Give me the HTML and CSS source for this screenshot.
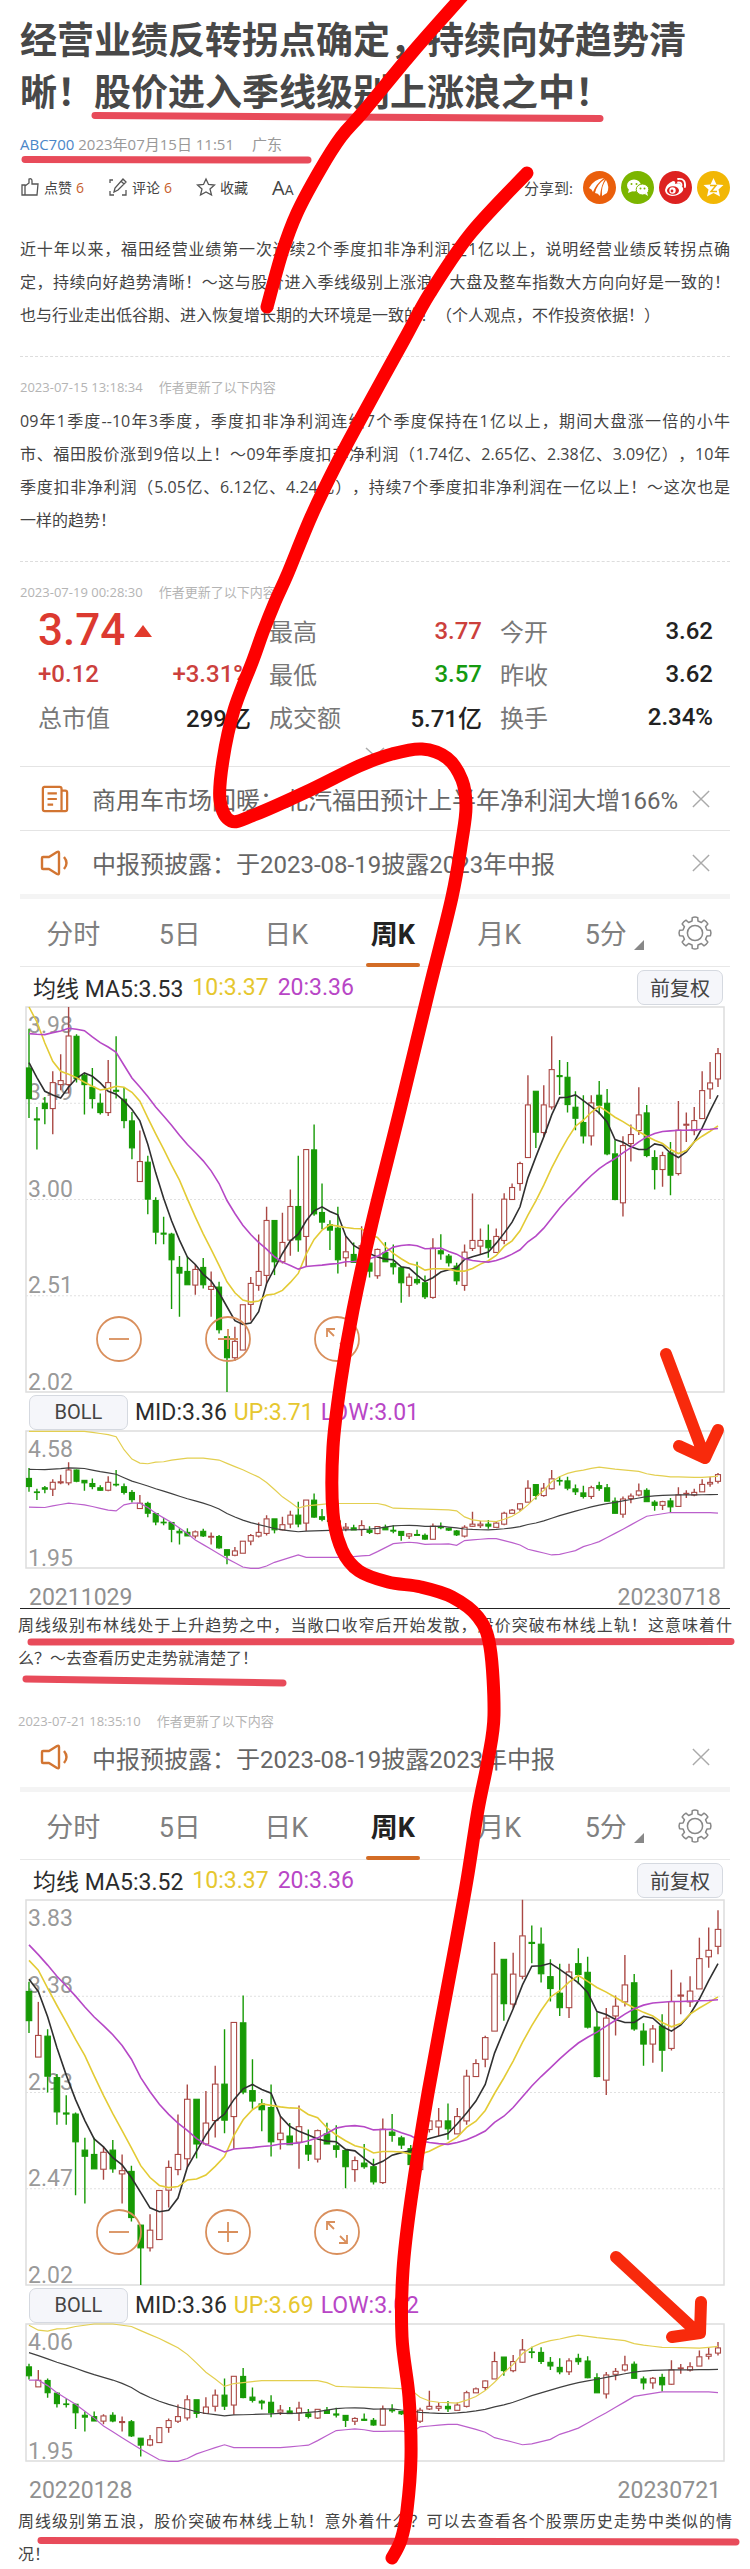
FILE: index.html
```html
<!DOCTYPE html>
<html lang="zh-CN">
<head>
<meta charset="utf-8">
<meta name="viewport" content="width=device-width, initial-scale=1">
<title>经营业绩反转拐点确定，持续向好趋势清晰！</title>
<link rel="stylesheet" href="styles.css">
</head>
<body>
<svg class="defs" aria-hidden="true">
  <symbol id="gear" viewBox="0 0 40 40"><path d="M17.1 3.8Q20 2.6 22.9 3.8L23.1 7.4L26.7 8.9L29.5 6.5Q32 8 33.5 10.5L31.1 13.3L32.6 16.9L36.2 17.1Q37.4 20 36.2 22.9L32.6 23.1L31.1 26.7L33.5 29.5Q32 32 29.5 33.5L26.7 31.1L23.1 32.6L22.9 36.2Q20 37.4 17.1 36.2L16.9 32.6L13.3 31.1L10.5 33.5Q8 32 6.5 29.5L8.9 26.7L7.4 23.1L3.8 22.9Q2.6 20 3.8 17.1L7.4 16.9L8.9 13.3L6.5 10.5Q8 8 10.5 6.5L13.3 8.9L16.9 7.4Z"/><circle cx="20" cy="20" r="8"/></symbol>
  <symbol id="horn" viewBox="0 0 30 28"><path d="M3 8H9L17 3Q19 2 19 4V24Q19 26 17 25L9 20H3Q2 20 2 19V9Q2 8 3 8Z"/><path d="M24 8Q29 14 24 20"/></symbol>
  <symbol id="cross" viewBox="0 0 20 20"><path d="M1 1L19 19M19 1L1 19"/></symbol>
</svg>
<article class="post">
  <h1 class="title"><span>经营业绩反转拐点确定，持续向好趋势清</span><span>晰！股价进入季线级别上涨浪之中！</span></h1>
  <p class="byline"><a href="#author">ABC700</a> <span>2023年07月15日 11:51</span> <span class="place">广东</span></p>
  <div class="toolbar">
    <button class="tool" type="button"><svg viewBox="0 0 20 20"><path d="M2 8H5V18H2ZM5 9L9 6V2Q12 1 12 4V7H18L17 18H5"/></svg>点赞 <b>6</b></button>
    <button class="tool" type="button"><svg viewBox="0 0 20 20"><path d="M2 6V3H5M2 14V18H6M18 13V18H14M6 15L7 11L15 2L18 5L10 13ZM13 4L16 7"/></svg>评论 <b>6</b></button>
    <button class="tool" type="button"><svg viewBox="0 0 20 20"><path d="M10 2L12.500 7.500L18.500 8L14 12L15.500 18L10 15L4.500 18L6 12L1.500 8L7.500 7.500Z"/></svg>收藏</button>
    <button class="tool size" type="button" aria-label="字号">A<small>A</small></button>
    <div class="share"><span>分享到:</span>
      <a href="#em" aria-label="东方财富"><svg viewBox="0 0 33 33"><circle cx="16.500" cy="16.500" r="16.500" fill="#ea5f0c"/><g fill="#fff"><path d="M6 17Q11 8 21 7Q13 13 10 21Q9 18 6 17Z"/><path d="M12 22Q14 13 22 8Q18 15 17 25Q15 22 12 22Z"/><path d="M19 25Q18 15 23 9Q27 16 24 22Q22 23 19 25Z"/></g></svg></a>
      <a href="#wx" aria-label="微信"><svg viewBox="0 0 33 33"><circle cx="16.500" cy="16.500" r="16.500" fill="#7bb500"/><g fill="#fff"><ellipse cx="13" cy="14.500" rx="7" ry="6"/><path d="M8 18L7 22L12 20Z"/><ellipse cx="21.500" cy="18.500" rx="6.300" ry="5.500" stroke="#7bb500"/><path d="M24 23L27 25L26 21Z"/></g><g fill="#7bb500"><circle cx="10.500" cy="13" r="1"/><circle cx="15.500" cy="13" r="1"/><circle cx="19.500" cy="17.500" r="1"/><circle cx="23.500" cy="17.500" r="1"/></g></svg></a>
      <a href="#wb" aria-label="微博"><svg viewBox="0 0 33 33"><circle cx="16.500" cy="16.500" r="16.500" fill="#dd2220"/><path d="M6 19Q7 13 14 10Q17 10 16 13Q22 11 22 15Q26 17 23 21Q19 25 13 25Q6 24 6 19Z" fill="#fff"/><ellipse cx="14" cy="19.500" rx="6" ry="4.300" fill="#dd2220"/><circle cx="13.500" cy="19.500" r="3.200" fill="#fff"/><circle cx="13" cy="20" r="1.400" fill="#dd2220"/><path d="M19 8Q27 7 26 16M19 11.500Q23 11 22.500 15" fill="none" stroke="#fff" stroke-width="1.800" stroke-linecap="round"/></svg></a>
      <a href="#qz" aria-label="QQ空间"><svg viewBox="0 0 33 33"><circle cx="16.500" cy="16.500" r="16.500" fill="#f2b705"/><path d="M16.500 7L19.500 13.500L26.500 14L21.500 18.500L23 25.500L16.500 22L10 25.500L11.500 18.500L6.500 14L13.500 13.500Z" fill="#fff"/><path d="M13 14.500H19L14 20.500H20" fill="none" stroke="#f2b705" stroke-width="1.500"/></svg></a>
    </div>
  </div>
  <p class="text lead"><span class="full">近十年以来，福田经营业绩第一次连续2个季度扣非净利润在1亿以上，说明经营业绩反转拐点确</span><span class="full">定，持续向好趋势清晰！～这与股价进入季线级别上涨浪、大盘及整车指数大方向向好是一致的！</span><span>也与行业走出低谷期、进入恢复增长期的大环境是一致的！（个人观点，不作投资依据！）</span></p>
  <hr class="dots">
  <p class="stamp"><time>2023-07-15 13:18:34</time><span>作者更新了以下内容</span></p>
  <p class="text"><span class="full">09年1季度--10年3季度，季度扣非净利润连续7个季度保持在1亿以上，期间大盘涨一倍的小牛</span><span class="full">市、福田股价涨到9倍以上！～09年季度扣非净利润（1.74亿、2.65亿、2.38亿、3.09亿），10年</span><span class="full">季度扣非净利润（5.05亿、6.12亿、4.24亿），持续7个季度扣非净利润在一亿以上！～这次也是</span><span>一样的趋势！</span></p>
  <hr class="dots">
  <p class="stamp"><time>2023-07-19 00:28:30</time><span>作者更新了以下内容</span></p>

  <section class="app">
    <dl class="quote">
      <div class="price"><dt class="hide">现价</dt><dd>3.74</dd><svg viewBox="0 0 18 12"><path d="M9 0L18 12H0Z"/></svg></div>
      <div><dt>最高</dt><dd class="up">3.77</dd></div><div><dt>今开</dt><dd>3.62</dd></div>
      <div><dt class="up strong">+0.12</dt><dd class="up">+3.31%</dd></div>
      <div><dt>最低</dt><dd class="down">3.57</dd></div><div><dt>昨收</dt><dd>3.62</dd></div>
      <div><dt>总市值</dt><dd>299亿</dd></div><div><dt>成交额</dt><dd>5.71亿</dd></div><div><dt>换手</dt><dd>2.34%</dd></div>
    </dl>
    <button class="more" type="button" aria-label="展开"><svg viewBox="0 0 20 10"><path d="M1 1L10 9L19 1"/></svg></button>
    <div class="news"><svg class="mark" viewBox="0 0 30 30"><path d="M3 2H20Q22 2 22 4V28H4Q2 28 2 26V4Q2 2 4 2M22 6H26Q28 6 28 8V26Q28 28 26 28H22M7 9H17M7 15H17M7 21H13"/></svg><span>商用车市场回暖：北汽福田预计上半年净利润大增166%</span><button type="button" aria-label="关闭"><svg><use href="#cross"/></svg></button></div>
    <div class="news"><svg class="mark"><use href="#horn"/></svg><span>中报预披露：于2023-08-19披露2023年中报</span><button type="button" aria-label="关闭"><svg><use href="#cross"/></svg></button></div>
    <nav class="tabs"><button type="button">分时</button><button type="button">5日</button><button type="button">日K</button><button type="button" class="on">周K</button><button type="button">月K</button><button type="button" class="drop">5分</button><button type="button" aria-label="设置"><svg><use href="#gear"/></svg></button></nav>
    <div class="legend"><span>均线 MA5:3.53</span><span class="y">10:3.37</span><span class="m">20:3.36</span><button class="chip" type="button">前复权</button></div>
    <div class="chart"><svg id="k1" viewBox="0 0 698 386"></svg>
      <div class="zoom"><button type="button" aria-label="缩小"><svg viewBox="0 0 46 46"><circle cx="23" cy="23" r="22"/><path d="M13 23H33"/></svg></button><button type="button" aria-label="放大"><svg viewBox="0 0 46 46"><circle cx="23" cy="23" r="22"/><path d="M13 23H33M23 13V33"/></svg></button><button type="button" aria-label="全屏"><svg viewBox="0 0 46 46"><circle cx="23" cy="23" r="22"/><path d="M13 21V13H21M13 13L20 20M33 26V34H25M33 34L26 27"/></svg></button></div></div>
    <div class="legend boll"><button class="chip" type="button">BOLL</button><span>MID:3.36</span><span class="y">UP:3.71</span><span class="m">LOW:3.01</span></div>
    <div class="chart"><svg id="b1" viewBox="0 0 698 138"></svg></div>
    <div class="dates ruled"><time>20211029</time><time>20230718</time></div>
  </section>
  <p class="text wide"><span class="full">周线级别布林线处于上升趋势之中，当敞口收窄后开始发散，股价突破布林线上轨！这意味着什</span><span>么？～去查看历史走势就清楚了！</span></p>
  <p class="stamp wide last"><time>2023-07-21 18:35:10</time><span>作者更新了以下内容</span></p>

  <section class="app">
    <div class="news short"><svg class="mark"><use href="#horn"/></svg><span>中报预披露：于2023-08-19披露2023年中报</span><button type="button" aria-label="关闭"><svg><use href="#cross"/></svg></button></div>
    <nav class="tabs"><button type="button">分时</button><button type="button">5日</button><button type="button">日K</button><button type="button" class="on">周K</button><button type="button">月K</button><button type="button" class="drop">5分</button><button type="button" aria-label="设置"><svg><use href="#gear"/></svg></button></nav>
    <div class="legend"><span>均线 MA5:3.52</span><span class="y">10:3.37</span><span class="m">20:3.36</span><button class="chip" type="button">前复权</button></div>
    <div class="chart"><svg id="k2" viewBox="0 0 698 386"></svg>
      <div class="zoom"><button type="button" aria-label="缩小"><svg viewBox="0 0 46 46"><circle cx="23" cy="23" r="22"/><path d="M13 23H33"/></svg></button><button type="button" aria-label="放大"><svg viewBox="0 0 46 46"><circle cx="23" cy="23" r="22"/><path d="M13 23H33M23 13V33"/></svg></button><button type="button" aria-label="全屏"><svg viewBox="0 0 46 46"><circle cx="23" cy="23" r="22"/><path d="M13 21V13H21M13 13L20 20M33 26V34H25M33 34L26 27"/></svg></button></div></div>
    <div class="legend boll"><button class="chip" type="button">BOLL</button><span>MID:3.36</span><span class="y">UP:3.69</span><span class="m">LOW:3.02</span></div>
    <div class="chart"><svg id="b2" viewBox="0 0 698 138"></svg></div>
    <div class="dates"><time>20220128</time><time>20230721</time></div>
  </section>
  <p class="text wide closing"><span class="full">周线级别第五浪，股价突破布林线上轨！意外着什么？可以去查看各个股票历史走势中类似的情</span><span>况！</span></p>

  <svg class="ink" viewBox="0 0 750 2569" preserveAspectRatio="none" aria-hidden="true">
    <g stroke="#e84b5a" stroke-width="7"><path d="M95 115.500L600 118.500M25 159.500L308 160M31 1642L731 1641.500M26 1679L283 1683M41 2540.500L736 2542"/></g>
    <g stroke="#f82a0c" stroke-width="12"><path d="M666 1354L705 1458M679 1446L705 1458L718 1430"/><path d="M616 2257L698 2333M672 2337L700 2333L701 2302"/></g>
    <g stroke="#fe0000" stroke-width="13" id="pen"></g>
  </svg>
</article>
<script src="chart.js"></script>
</body>
</html>
```
FILE: styles.css
```css
* { box-sizing: border-box; }
body { margin: 0; background: #fff; }
button { border: 0; padding: 0; margin: 0; background: none; font: inherit; color: inherit; }
svg { display: block; }
.defs { position: absolute; width: 0; height: 0; }
.post { position: relative; padding: 14px 20px 0; overflow: hidden; font-family: "Open Sans", "Noto Sans CJK SC", sans-serif; color: #444; text-spacing-trim: space-all; }
.title { margin: 0; font-size: 37px; line-height: 52px; font-weight: 700; color: #484848; }
.title span, .text span { display: block; white-space: nowrap; }
.byline { margin: 14px 0; font-size: 15px; line-height: 24px; color: #999; }
.byline a { color: #4a86c8; text-decoration: none; }
.place { margin-left: 14px; }
.toolbar { display: flex; align-items: center; height: 34px; gap: 24px; font-size: 14px; }
.tool { display: flex; align-items: center; gap: 4px; white-space: nowrap; }
.tool svg { width: 20px; height: 20px; fill: none; stroke: #555; stroke-width: 1.3; }
.tool b { font-weight: 400; color: #c7602c; }
.size { align-items: baseline; gap: 0; font-size: 20px; }
.size small { font-size: 14px; }
.share { display: flex; align-items: center; gap: 5px; margin-left: auto; font-size: 15px; }
.share span { margin-right: 5px; }
.share svg { width: 33px; height: 33px; }
.text { margin: 0; font-size: 16px; line-height: 33px; }
.text .full { text-align: justify; text-align-last: justify; }
.lead { margin-top: 29px; }
.dots { margin: 24px 0 20px; border: 0; border-top: 1px dashed #ddd; }
.stamp { display: flex; gap: 16px; margin: 0; font-size: 13px; line-height: 20px; color: #b4b4b4; }
.stamp + .text { margin-top: 8px; }
.wide { margin-left: -2px; margin-right: -2px; }
.last { margin-top: 36px; }
.closing { margin-top: 3px; margin-bottom: -2px; }
.app { font-family: Roboto, "Noto Sans CJK SC", sans-serif; }
.quote { display: grid; grid-template-columns: repeat(3, 1fr); column-gap: 18px; grid-auto-rows: 43px; margin: 7px 17px 0 18px; font-size: 24px; }
.quote div { display: flex; align-items: center; justify-content: space-between; }
.quote dt { color: #777; }
.quote dd { margin: 0; font-weight: 500; color: #222; }
.quote .price { justify-content: flex-start; gap: 9px; }
.quote .price dd { font-size: 44px; line-height: 43px; color: #dc3a30; }
.price svg { width: 18px; height: 12px; fill: #e23a2c; }
.quote .hide { display: none; }
.quote .up { color: #cc403c; }
.quote .strong { font-weight: 500; }
.quote .down { color: #159a10; }
.more { display: block; width: 100%; height: 28px; }
.more svg { width: 20px; height: 10px; margin: 0 auto; fill: none; stroke: #aaa; stroke-width: 1.5; }
.news { display: grid; grid-template-columns: 30px minmax(0, 1fr) 18px; align-items: center; gap: 22px; height: 64px; padding: 0 20px; border-top: 1px solid #e4e4e4; font-size: 24px; color: #666; white-space: nowrap; }
.news.short { height: 52px; margin-bottom: 4px; border: 0; }
.mark { width: 30px; height: 28px; fill: none; stroke: #d27532; stroke-width: 2.4; stroke-linejoin: round; }
.news button svg { width: 18px; height: 18px; stroke: #aaa; stroke-width: 1.6; fill: none; }
.tabs { display: grid; grid-template-columns: repeat(6, 15fr) 10fr; height: 73px; border-top: 5px solid #f4f4f4; border-bottom: 1px solid #e8e8e8; font-size: 27px; color: #808080; }
.tabs button { display: flex; position: relative; align-items: center; justify-content: center; }
.tabs .on { font-weight: 700; color: #222; }
.tabs .on::after { content: ""; position: absolute; bottom: -1px; width: 54px; height: 4px; border-radius: 2px; background: #d36c25; }
.tabs .drop::after { content: ""; position: absolute; right: 15px; bottom: 16px; border: 5px solid #888; border-left-color: transparent; border-top-color: transparent; }
.tabs svg { width: 38px; height: 38px; fill: none; stroke: #888; stroke-width: 1.6; stroke-linejoin: round; }
.legend { display: flex; align-items: center; gap: 9px; height: 40px; padding: 0 7px 0 13px; font-size: 23px; color: #2c2c2c; white-space: nowrap; }
.y { color: #e6c72f; }
.m { color: #b846c6; }
.chip { margin-left: auto; width: 86px; height: 35px; border: 1px solid #d5d9e0; border-radius: 7px; background: #f5f6fa; font-size: 20px; color: #444; }
.boll { height: 38px; padding: 0 9px; gap: 7px; }
.boll .chip { width: 99px; margin: 0; }
.chart { position: relative; margin: 0 6px; }
.chart > svg { width: 100%; overflow: visible; }
.chart text { font-size: 23px; fill: #8c8c8c; fill-opacity: .9; }
.zoom { position: absolute; left: 10%; bottom: 8%; display: flex; gap: 63px; }
.zoom svg { width: 46px; height: 46px; fill: none; stroke: #d98f5c; stroke-width: 1.8; }
.dates { display: flex; justify-content: space-between; padding: 18px 9px 0; height: 40px; font-size: 23px; line-height: 22px; color: #909090; }
.ruled { border-bottom: 1px solid #222; }
.ink { position: absolute; left: 0; top: 0; width: 100%; height: 100%; fill: none; stroke-linecap: round; stroke-linejoin: round; pointer-events: none; }
```
FILE: chart.js
```js
// Weekly bars: direction, high, body top, body bottom, low, as depth below 3.98 + 50 units.
const BARS = `g 115 233 325 383|g 350 386 389 478|g 320 339 355 402|r 243 277 355 432|r 192 271 283 300|r 50 137 283 310|g 132 138 265 277|g 250 255 283 373|g 233 291 325 355|g 310 339 367 373|r 209 277 367 377|g 138 300 303 325|g 291 327 391 414|g 365 392 473 507|r 421 514 574 574|g 497 516 627 672|g 621 631 726 762|g 680 729 732 762|g 728 732 809 957|g 798 832 849 980|g 798 844 884 884|r 822 838 885 914|g 804 832 884 895|r 844 889 898 980|g 875 891 1019 1030|g 1039 1040 1103 1206|r 1010 1054 1103 1113|r 944 944 1080 1080|r 861 880 943 991|r 733 844 886 902|r 650 691 856 880|g 691 691 815 855|r 668 757 815 820|r 598 649 750 797|g 497 649 749 785|r 478 478 739 828|g 403 479 671 677|g 580 667 696 717|g 690 704 720 780|g 650 714 809 850|r 738 785 803 830|g 757 793 817 818|r 708 767 810 884|g 775 819 843 862|r 775 778 857 866|g 756 787 815 815|g 763 820 830 853|g 830 833 878 938|r 850 861 886 920|g 815 868 878 884|g 856 878 920 927|r 744 774 922 926|g 732 782 791 809|g 792 798 818 829|g 818 828 872 884|r 763 786 886 902|r 610 751 775 783|r 715 751 768 793|g 703 751 773 803|r 715 739 787 787|r 609 627 751 762|r 580 592 628 628|r 515 520 580 602|r 255 344 502 502|g 302 303 426 473|r 285 344 427 440|r 138 238 350 358|g 209 256 259 314|g 215 261 343 367|g 303 351 384 420|g 315 397 437 460|r 315 338 437 466|g 272 315 345 372|g 296 339 491 495|g 450 491 628 630|r 438 466 638 679|r 403 433 460 514|r 291 374 421 434|g 344 368 496 501|g 480 502 538 598|r 485 496 538 590|g 455 488 555 615|r 332 420 550 556|r 367 402 405 455|r 350 391 421 435|r 243 301 385 385|r 215 278 296 326|r 173 190 266 290`
  .split('|').map(s => s.split(' ').map((v, i) => (i ? +v : v)));
const list = s => s.split(' ').map(Number);
const MA5 = list('217 262 303 314 323 290 264 248 258 278 303 312 332 358 392 462 548 624 692 750 801 823 853 873 908 950 992 1003 999 965 880 835 790 752 732 692 662 650 664 674 738 766 780 790 801 807 809 830 834 855 874 863 846 839 834 808 800 793 786 759 729 696 650 563 500 440 374 322 321 314 331 349 368 395 448 456 470 478 478 461 466 489 502 485 455 413 362 315');
const MA10 = list('50 95 158 213 243 252 262 276 288 299 295 288 291 306 333 383 431 477 525 570 626 680 731 778 826 875 908 930 936 933 915 912 901 877 850 792 748 720 704 708 712 715 716 733 742 770 790 806 820 826 840 836 836 837 843 843 835 822 812 796 769 752 722 675 632 585 533 487 445 408 390 366 348 364 381 394 409 424 438 450 460 478 490 481 455 438 423 407');
const MA20 = list('130 132 133 127 122 114 117 121 140 157 170 186 225 263 290 319 350 377 405 435 463 487 512 542 580 631 670 705 733 757 777 800 816 826 837 829 827 825 822 820 815 814 812 806 798 785 771 766 764 767 776 775 774 784 792 806 811 814 816 811 803 792 779 755 738 714 684 654 628 604 579 556 535 519 505 488 472 455 440 430 424 422 420 420 419 418 417 415');
// Bollinger bands as depth below 4.58 + 156 units; listed as index:value knots.
const knots = s => {
  const k = s.split(' ').map(p => p.split(':').map(Number)), out = [];
  for (let n = 0; n < k.length - 1; n++) {
    const [a, u] = k[n], [b, v] = k[n + 1];
    for (let i = a; i < b; i++) out[i] = u + (v - u) * (i - a) / (b - a);
  }
  out.push(k[k.length - 1][1]);
  return out;
};
const UP = knots('0:157 7:157 8:160 10:167 11:173 12:212 13:240 14:252 15:254 16:249 17:248 18:243 20:237 22:237 23:240 24:243 25:253 27:272 29:294 30:310 31:331 32:353 33:369 34:387 35:380 38:373 44:373 45:378 46:387 53:392 54:395 55:413 56:422 57:425 59:427 60:420 61:411 62:397 63:377 64:354 65:334 66:308 67:293 68:283 69:277 70:273 71:268 72:264 73:267 74:270 77:277 78:284 79:288 81:293 85:295 87:291');
const LOW = knots('0:384 2:385 3:380 5:372 7:377 8:382 10:393 11:395 12:377 13:372 14:372 15:385 16:402 18:430 20:463 21:482 23:510 25:538 27:563 28:567 29:567 30:560 31:549 33:534 34:527 35:534 40:534 43:528 44:517 46:493 48:489 49:491 50:495 53:494 54:498 55:484 58:478 59:478 61:490 62:497 63:510 65:521 66:527 67:525 69:514 70:502 71:495 72:487 75:450 78:411 81:400 86:400 87:402');
const price = v => 3.98 - (v - 50) * 1.96 / 1156;
const band = v => 4.58 - (v - 156) * 2.63 / 410;

function draw(id, from, hi, lo, h, lines, labels, lastBar, width) {
  const bars = BARS.slice(from);
  if (lastBar) bars[bars.length - 1] = lastBar;
  const X = i => 3 + i * 689 / (bars.length - 1);
  const Y = p => (hi - p) / (hi - lo) * h;
  let s = `<rect x="0" y="0" width="698" height="${h}" fill="none" stroke="#ddd" stroke-width="1.5"/>`;
  if (h > 200) for (let q = 1; q < 4; q++) s += `<path d="M0 ${h * q / 4}H698" stroke="#e0e0e0" stroke-dasharray="2 2"/>`;
  labels.forEach(([t, y]) => { s += `<text x="2" y="${y}">${t}</text>`; });
  bars.forEach(([c, a, b, d, e], i) => {
    const [ya, yb, yd, ye] = [a, b, d, e].map(v => Y(price(v))), x = X(i);
    const col = c === 'g' ? '#179a05' : '#aa4844';
    s += `<path d="M${x} ${ya}V${yb}M${x} ${yd}V${ye}" stroke="${col}" stroke-width="1.4"/>`;
    s += `<rect x="${x - width / 2}" y="${yb}" width="${width}" height="${Math.max(yd - yb, 0.6)}" stroke="${col}" stroke-width="1.1" fill="${c === 'g' ? col : '#fff'}"/>`;
  });
  lines.forEach(([data, f, col]) => {
    const pts = data.slice(from).map((v, i) => `${X(i)},${Math.max(0, Y(f(v)))}`).join(' ');
    s += `<polyline points="${pts}" fill="none" stroke="${col}" stroke-width="${h > 200 ? 1.6 : 1.2}"/>`;
  });
  document.getElementById(id).innerHTML = s;
}
const ma = [[MA5, price, '#303030'], [MA10, price, '#e3cb35'], [MA20, price, '#b648c6']];
const boll = [[MA20, price, '#404040'], [UP, band, '#e3cf50'], [LOW, band, '#bb60cc']];
const last = ['r', 167, 220, 267, 289];
draw('k1', 0, 3.98, 2.02, 385, ma, [['3.98', 26], ['3.49', 93], ['3.00', 190], ['2.51', 286], ['2.02', 383]], null, 5);
draw('b1', 0, 4.58, 1.95, 137, boll, [['4.58', 26], ['1.95', 135]], null, 5);
draw('k2', 13, 3.83, 2.02, 385, ma, [['3.83', 26], ['3.38', 93], ['2.93', 190], ['2.47', 286], ['2.02', 383]], last, 5.5);
draw('b2', 13, 4.06, 1.95, 137, boll, [['4.06', 26], ['1.95', 135]], last, 5);

// Freehand pen strokes, smoothed through their sample points.
const strokes = [
  [[466, -8], [432, 30], [406, 60], [363, 112], [341, 137], [320, 170], [297, 213], [282, 253], [267, 307]],
  [[527, 173], [471, 233], [430, 293], [404, 340], [360, 420], [335, 467], [311, 517], [288, 573], [275, 602], [263, 632], [253, 660], [234, 710], [223, 760], [220, 800], [231, 821], [254, 815], [306, 792], [359, 766], [392, 754], [422, 749], [447, 758], [462, 780], [466, 807], [462, 840], [452, 897], [429, 990], [400, 1110], [372, 1223], [353, 1310], [341, 1380], [333, 1447], [333, 1513], [342, 1550], [359, 1571], [388, 1582], [421, 1587], [452, 1597], [478, 1617], [490, 1647], [494, 1715], [488, 1760], [478, 1810], [467, 1880], [455, 1947], [428, 2093], [411, 2200], [403, 2270], [402, 2337], [409, 2397], [411, 2457], [407, 2510], [401, 2540], [392, 2558]]
];
document.getElementById('pen').innerHTML = strokes.map(p => {
  let d = `M${p[0]}`;
  for (let i = 0; i < p.length - 1; i++) {
    const a = p[i - 1] || p[i], b = p[i], c = p[i + 1], e = p[i + 2] || c;
    d += `C${b[0] + (c[0] - a[0]) / 6} ${b[1] + (c[1] - a[1]) / 6} ${c[0] - (e[0] - b[0]) / 6} ${c[1] - (e[1] - b[1]) / 6} ${c}`;
  }
  return `<path d="${d}"/>`;
}).join('');
```
